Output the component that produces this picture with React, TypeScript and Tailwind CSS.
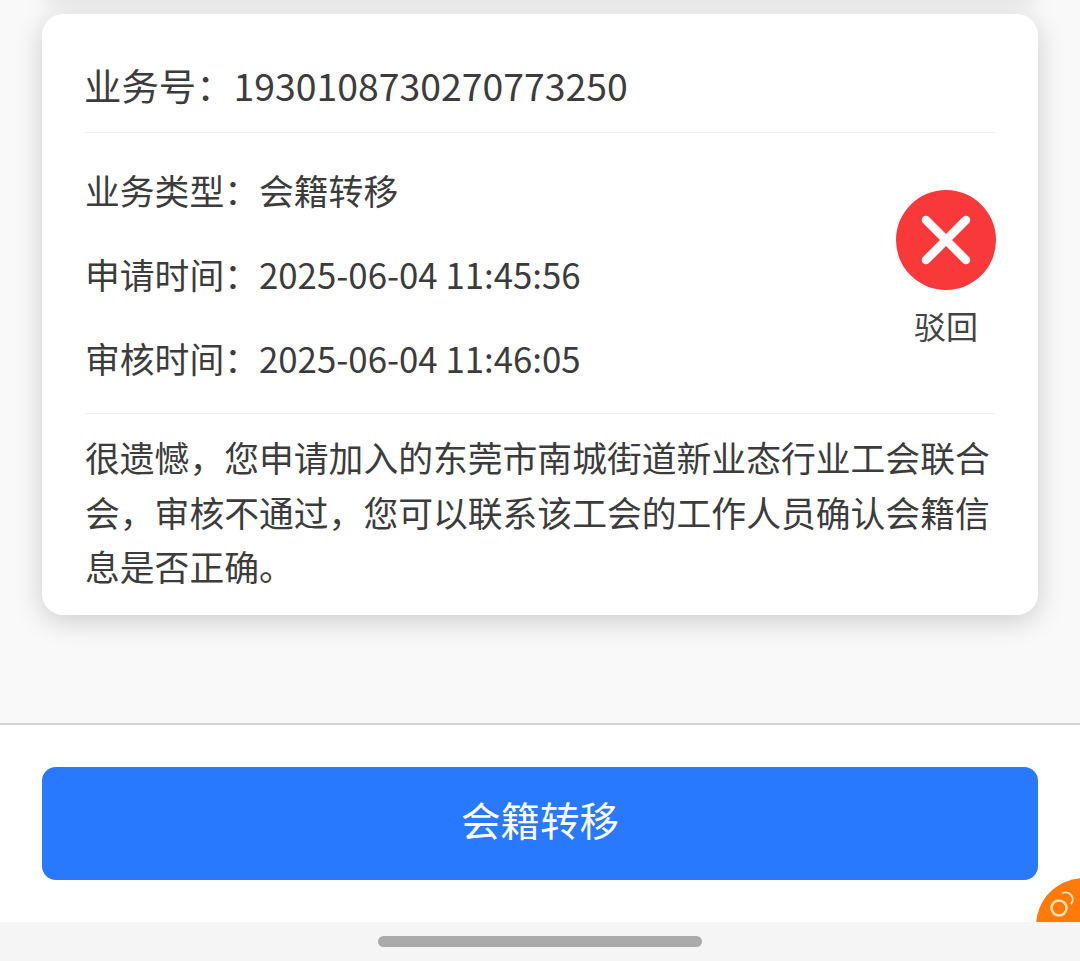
const font = { fontFamily: '"Noto Sans CJK SC", "Noto Sans", sans-serif' };

function RejectIcon() {
  return (
    <svg width="100" height="100" viewBox="0 0 100 100">
      <circle cx="50" cy="50" r="50" fill="#f9383a" />
      <path d="M30 30 L70 70 M70 30 L30 70" stroke="#fff" strokeWidth="8.5" strokeLinecap="round" />
    </svg>
  );
}

const bizNo = '业务号\uFF1A1930108730270773250';
const notice =
  '很遗憾\uFF0C您申请加入的东莞市南城街道新业态行业工会联合会\uFF0C审核不通过\uFF0C您可以联系该工会的工作人员确认会籍信息是否正确。';

export default function App() {
  const rows = [
    ['业务类型\uFF1A', '会籍转移'],
    ['申请时间\uFF1A', '2025-06-04 11:45:56'],
    ['审核时间\uFF1A', '2025-06-04 11:46:05'],
  ];

  return (
    <div lang="zh-CN" className="h-[961px] w-[1080px] flex flex-col overflow-hidden bg-[#f9f9f9] text-[#3c3c3c]" style={font}>
      <div className="h-[723px] px-[42px] overflow-hidden">
        {/* previous card, only its shadow shows */}
        <div className="h-[20px] -mt-[24px] rounded-[21px] bg-white shadow-[0_4px_22px_rgba(0,0,0,0.12)]" />
        <div className="mt-[18px] h-[601px] rounded-[21px] bg-white px-[43px] shadow-[0_6px_28px_rgba(0,0,0,0.18)]">
          <div className="h-[119px] flex items-center border-b border-[#f1f1f1] text-[37.4px] pt-[43px] pb-[19px] leading-[54px]">
            <span className="-ml-[1px]">{bizNo}</span>
          </div>
          <div className="h-[281px] flex items-center justify-between border-b border-[#f1f1f1]">
            <div className="flex flex-col gap-[34px] text-[34.8px] leading-[50px] mt-[2px]">
              {rows.map((r) => (
                <div key={r[0]} className="flex">
                  <span>{r[0]}</span>
                  <span>{r[1]}</span>
                </div>
              ))}
            </div>
            <div className="flex flex-col items-center -mt-[8px] -mr-[1px]">
              <RejectIcon />
              <span className="mt-[11px] text-[32px] leading-[48px] text-[#444]">驳回</span>
            </div>
          </div>
          <p className="pt-[16px] text-[34.8px] leading-[54.5px]">{notice}</p>
        </div>
      </div>

      <div className="relative h-[199px] overflow-hidden border-t-2 border-[#d0d0d0] bg-white px-[42px] pt-[42px]">
        <button className="h-[113px] w-[996px] rounded-[14px] bg-[#2979ff] pb-[9px] text-[39.5px] text-white">
          会籍转移
        </button>
        <div className="absolute left-[1036px] top-[153px] h-[96px] w-[96px] rounded-full bg-[#ff7a0a]">
          <svg width="44" height="44" viewBox="0 0 44 44" className="absolute left-[10px] top-[8px]" fill="none" stroke="#ffe3ad" strokeWidth="2.5">
            <circle cx="13" cy="22" r="7.5" />
            <path d="M16 7.5 A7 7 0 0 1 25 18" strokeWidth="2" />
          </svg>
        </div>
      </div>

      <div className="h-[39px] flex justify-center bg-[#f5f5f5] pt-[14px]">
        <div className="h-[11px] w-[324px] rounded-full bg-[#ababab]" />
      </div>
    </div>
  );
}
